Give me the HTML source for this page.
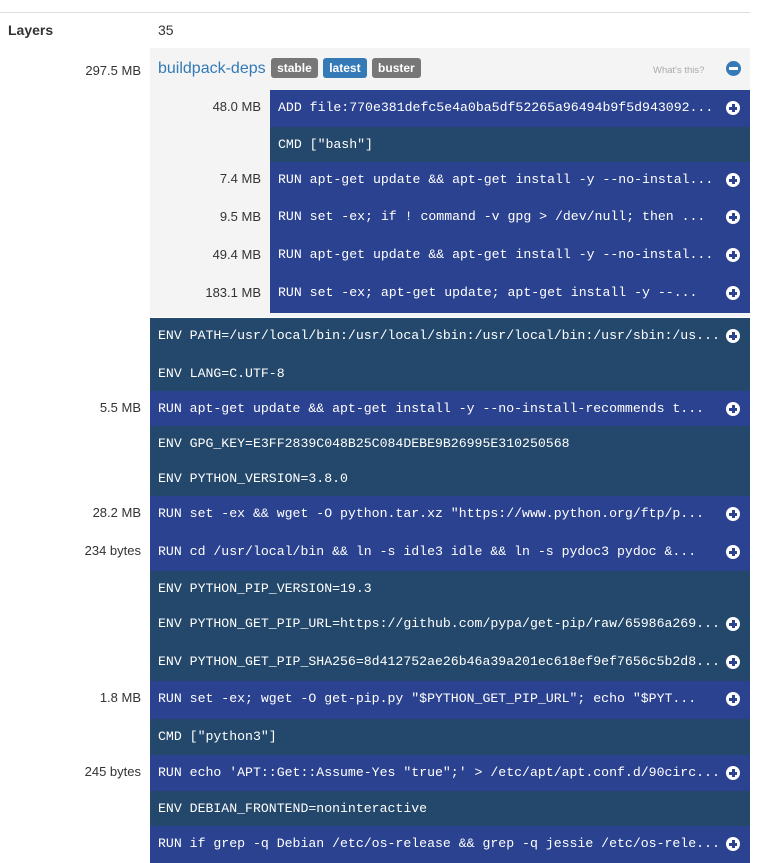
<!DOCTYPE html>
<html><head><meta charset="utf-8"><style>
*{margin:0;padding:0;box-sizing:border-box}
body{width:762px;height:863px;overflow:hidden;background:#fff;font-family:"Liberation Sans",sans-serif;font-size:13px;color:#333;position:relative}
.hr{position:absolute;left:0;top:12px;width:750px;height:1px;background:#ddd}
.lab{position:absolute;left:8px;top:22px;font-weight:bold;font-size:14px}
.cnt{position:absolute;left:158px;top:22px;font-size:14px}
.panel{position:absolute;left:150px;top:48px;width:600px;height:269px;background:#f4f4f4}
.sz{position:absolute;text-align:right;font-size:13px;color:#333}
.row{position:absolute;color:#fff;font-family:"Liberation Mono",monospace;font-size:13.2px;line-height:18px;padding-top:9px;padding-left:8px;white-space:nowrap}
.r{background:#2b4290}.e{background:#23486b}
.ic{position:absolute;right:10px;top:11px;width:14px;height:14px;border-radius:50%;background:#fff}
.ic:before{content:"";position:absolute;left:3px;top:5.5px;width:8px;height:3px;background:#2b4290}
.ic:after{content:"";position:absolute;left:5.5px;top:3px;width:3px;height:8px;background:#2b4290}
.b{display:inline-block;color:#fff;font-weight:bold;font-size:12px;padding:3px 6px 3px;border-radius:3px;line-height:14px;margin-left:1px}
</style></head><body>
<div class="hr"></div>
<div class="lab">Layers</div>
<div class="cnt">35</div>
<div class="sz" style="left:0;width:141px;top:63px">297.5 MB</div>
<div class="panel">
 <div style="position:absolute;left:8px;top:11px;font-size:16px;color:#337ab7">buildpack-deps <span class="b" style="background:#777;position:relative;top:-1px">stable</span> <span class="b" style="background:#337ab7;position:relative;top:-1px">latest</span> <span class="b" style="background:#777;position:relative;top:-1px">buster</span></div>
 <div style="position:absolute;left:503px;top:17px;font-size:9.5px;color:#aaa">What's this?</div>
 <div style="position:absolute;left:576px;top:13px;width:15px;height:15px;border-radius:50%;background:#337ab7"><div style="position:absolute;left:3px;top:6px;width:9px;height:3px;background:#fff"></div></div>
</div>
<div class="sz" style="left:150px;width:111px;top:99px">48.0 MB</div>
<div class="row r" style="left:270px;width:480px;top:90px;height:37px">ADD file:770e381defc5e4a0ba5df52265a96494b9f5d943092...<span class="ic"></span></div>
<div class="row e" style="left:270px;width:480px;top:127px;height:35px">CMD ["bash"]</div>
<div class="sz" style="left:150px;width:111px;top:171px">7.4 MB</div>
<div class="row r" style="left:270px;width:480px;top:162px;height:37px">RUN apt-get update &amp;&amp; apt-get install -y --no-instal...<span class="ic"></span></div>
<div class="sz" style="left:150px;width:111px;top:209px">9.5 MB</div>
<div class="row r" style="left:270px;width:480px;top:199px;height:38px">RUN set -ex; if ! command -v gpg &gt; /dev/null; then ...<span class="ic"></span></div>
<div class="sz" style="left:150px;width:111px;top:247px">49.4 MB</div>
<div class="row r" style="left:270px;width:480px;top:237px;height:38px">RUN apt-get update &amp;&amp; apt-get install -y --no-instal...<span class="ic"></span></div>
<div class="sz" style="left:150px;width:111px;top:285px">183.1 MB</div>
<div class="row r" style="left:270px;width:480px;top:275px;height:38px">RUN set -ex; apt-get update; apt-get install -y --...<span class="ic"></span></div>

<div class="row e" style="left:150px;width:600px;top:318px;height:38px">ENV PATH=/usr/local/bin:/usr/local/sbin:/usr/local/bin:/usr/sbin:/us...<span class="ic"></span></div>
<div class="row e" style="left:150px;width:600px;top:356px;height:35px">ENV LANG=C.UTF-8</div>
<div class="sz" style="left:0;width:141px;top:400px">5.5 MB</div>
<div class="row r" style="left:150px;width:600px;top:391px;height:35px">RUN apt-get update &amp;&amp; apt-get install -y --no-install-recommends t...<span class="ic"></span></div>
<div class="row e" style="left:150px;width:600px;top:426px;height:35px">ENV GPG_KEY=E3FF2839C048B25C084DEBE9B26995E310250568</div>
<div class="row e" style="left:150px;width:600px;top:461px;height:35px">ENV PYTHON_VERSION=3.8.0</div>
<div class="sz" style="left:0;width:141px;top:505px">28.2 MB</div>
<div class="row r" style="left:150px;width:600px;top:496px;height:38px">RUN set -ex &amp;&amp; wget -O python.tar.xz "https://www.python.org/ftp/p...<span class="ic"></span></div>
<div class="sz" style="left:0;width:141px;top:543px">234 bytes</div>
<div class="row r" style="left:150px;width:600px;top:534px;height:37px">RUN cd /usr/local/bin &amp;&amp; ln -s idle3 idle &amp;&amp; ln -s pydoc3 pydoc &amp;...<span class="ic"></span></div>
<div class="row e" style="left:150px;width:600px;top:571px;height:35px">ENV PYTHON_PIP_VERSION=19.3</div>
<div class="row e" style="left:150px;width:600px;top:606px;height:38px">ENV PYTHON_GET_PIP_URL=https://github.com/pypa/get-pip/raw/65986a269...<span class="ic"></span></div>
<div class="row e" style="left:150px;width:600px;top:644px;height:37px">ENV PYTHON_GET_PIP_SHA256=8d412752ae26b46a39a201ec618ef9ef7656c5b2d8...<span class="ic"></span></div>
<div class="sz" style="left:0;width:141px;top:690px">1.8 MB</div>
<div class="row r" style="left:150px;width:600px;top:681px;height:38px">RUN set -ex; wget -O get-pip.py "$PYTHON_GET_PIP_URL"; echo "$PYT...<span class="ic"></span></div>
<div class="row e" style="left:150px;width:600px;top:719px;height:36px">CMD ["python3"]</div>
<div class="sz" style="left:0;width:141px;top:764px">245 bytes</div>
<div class="row r" style="left:150px;width:600px;top:755px;height:36px">RUN echo 'APT::Get::Assume-Yes "true";' &gt; /etc/apt/apt.conf.d/90circ...<span class="ic"></span></div>
<div class="row e" style="left:150px;width:600px;top:791px;height:35px">ENV DEBIAN_FRONTEND=noninteractive</div>
<div class="row r" style="left:150px;width:600px;top:826px;height:37px">RUN if grep -q Debian /etc/os-release &amp;&amp; grep -q jessie /etc/os-rele...<span class="ic"></span></div>
</body></html>
